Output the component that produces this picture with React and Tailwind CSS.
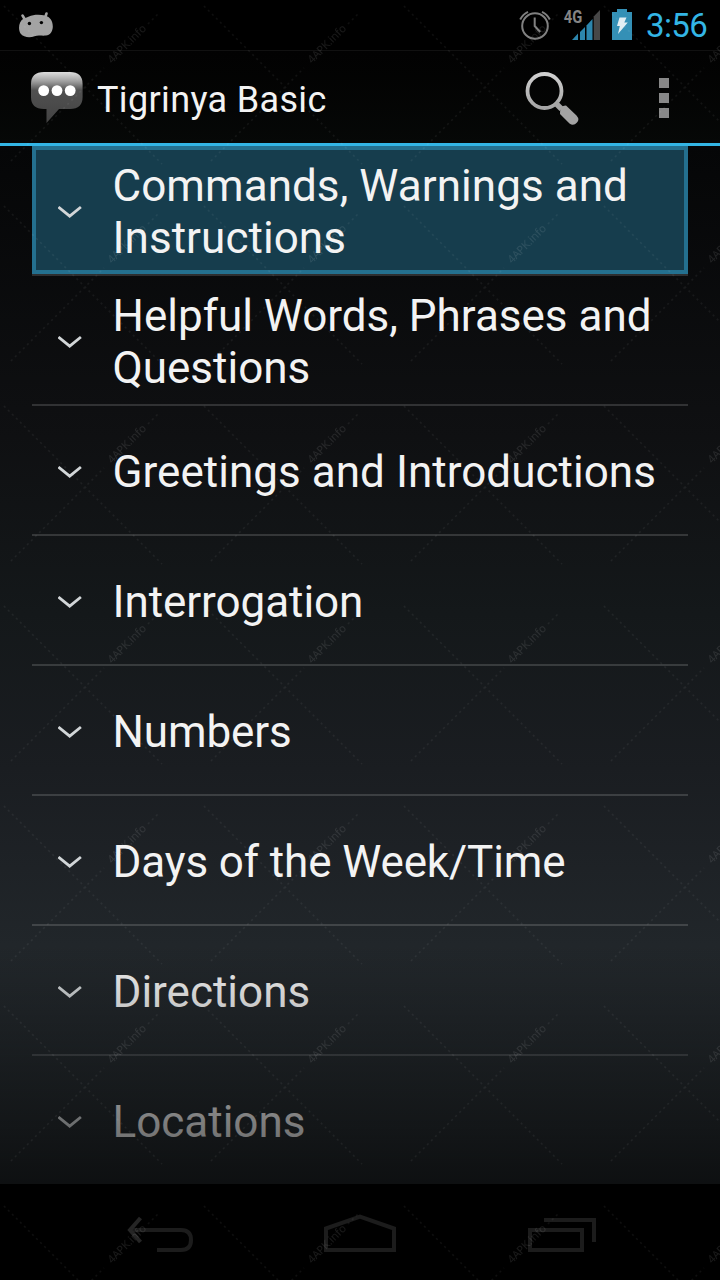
const sections = [
  { title: 'Commands, Warnings and Instructions', selected: true, spacing: 'tracking-[0.06px]' },
  { title: 'Helpful Words, Phrases and Questions', spacing: 'tracking-[0px]' },
  { title: 'Greetings and Introductions', spacing: 'tracking-[0.04px]' },
  { title: 'Interrogation', spacing: 'tracking-[-0.06px]' },
  { title: 'Numbers', spacing: 'tracking-[-0.1px]' },
  { title: 'Days of the Week/Time', spacing: 'tracking-[-0.12px]' },
  { title: 'Directions', spacing: 'tracking-[0px]' },
  { title: 'Locations', spacing: 'tracking-[0px]' }
];

function AndroidHead() {
  return (
    <svg className="h-[28px] w-[36px]" viewBox="0 0 36 28" aria-hidden="true">
      <path d="M4.500 4.500l3 5M28.500 2.500l-2 6" stroke="#a3a3a3" strokeWidth="2.600" strokeLinecap="round" />
      <path d="M11 5.500C15 3.500 22 3.500 27 4.500C32.500 6 35 10.500 34.800 16C34.500 21 32 24 28 24.500C24 25 20 23.800 16.500 25.200C12 27 5.500 26.500 2.500 22.500C-.2 18 1 10.500 5 8Z" fill="#a3a3a3" />
      <circle cx="11.400" cy="12.500" r="1.700" />
      <circle cx="23.400" cy="11.600" r="1.700" />
    </svg>
  );
}

function AlarmIcon() {
  return (
    <svg className="h-[30px] w-8" viewBox="0 0 32 30" fill="none" stroke="#808080" strokeWidth="2" aria-hidden="true">
      <circle cx="16" cy="16" r="12.800" />
      <path d="M15.700 7.500v8.500l5.500 6" />
      <path d="M1.200 9.500Q4 4 9 1.800M30.800 9.500Q28 4 23 1.800" />
    </svg>
  );
}

function SignalIcon() {
  return (
    <svg className="h-[34px] w-10 overflow-visible" viewBox="-4 -2 40 34" aria-hidden="true">
      <path d="M8 32l6-6.500V32z" fill="#2d86ad" />
      <path d="M16 24l5-5v13h-5z" fill="#2d86ad" />
      <path d="M22.500 17.500l6-6.500v21h-6z" fill="#2d86ad" />
      <path d="M29.700 8.500L36 2v30h-6.300z" fill="#474747" />
      <text x="-.3" y="15" fontFamily="Roboto, sans-serif" fontWeight="700" fontSize="19" textLength="18.500" lengthAdjust="spacingAndGlyphs" fill="#858585">4G</text>
    </svg>
  );
}

function BatteryIcon() {
  return (
    <svg className="h-[31px] w-5" viewBox="0 0 20 31" aria-hidden="true">
      <path d="M5 0h10v3h5v28H0V3h5z" fill="#3490b6" />
      <path d="M7.500 8.500h7l-2.200 5h3.500L6 25l1.800-8H5z" fill="#e1eef4" />
    </svg>
  );
}

function StatusBar() {
  return (
    <div className="flex h-[50px] shrink-0 items-start bg-black pl-[18px] pr-3">
      <div className="pt-[11px]"><AndroidHead /></div>
      <div className="ml-auto flex items-start">
        <div className="pt-[10px]"><AlarmIcon /></div>
        <div className="ml-[9px] pt-[6px]"><SignalIcon /></div>
        <div className="ml-3 pt-[9px]"><BatteryIcon /></div>
        <span className="ml-[14px] mt-[6px] w-[62px] whitespace-nowrap text-[33px] leading-[40px] tracking-[-0.6px] text-[#33b5e5]">3:56</span>
      </div>
    </div>
  );
}

function AppIcon() {
  return (
    <svg className="h-[54px] w-[54px]" viewBox="0 0 54 54" aria-hidden="true">
      <defs>
        <linearGradient id="bubble" x1="0" y1="0" x2="0" y2="1">
          <stop offset="0" stopColor="#dedede" />
          <stop offset=".18" stopColor="#a0a0a0" />
          <stop offset=".36" stopColor="#505050" />
          <stop offset="1" stopColor="#434343" />
        </linearGradient>
      </defs>
      <path d="M14 1h26q12.600 0 12.600 12v13q0 12-12.600 12H29L16.500 52V38H14Q1 38 1 26V13Q1 1 14 1z" fill="url(#bubble)" />
      <circle cx="13.700" cy="19.600" r="5.400" fill="#fff" />
      <circle cx="27" cy="19.600" r="5.400" fill="#fff" />
      <circle cx="40.200" cy="19.600" r="5.400" fill="#fff" />
    </svg>
  );
}

function SearchIcon() {
  return (
    <svg className="h-[54px] w-[54px]" viewBox="0 0 54 54" fill="none" aria-hidden="true">
      <defs>
        <linearGradient id="lens" x1="0" y1="0" x2="0" y2="1">
          <stop offset="0" stopColor="#d0d0d0" />
          <stop offset="1" stopColor="#a5a5a5" />
        </linearGradient>
      </defs>
      <circle cx="19.500" cy="19" r="17" stroke="url(#lens)" strokeWidth="3.800" />
      <path d="M30.500 31l6 6" stroke="#a5a5a5" strokeWidth="5.500" />
      <path d="M41 33.500L51.500 43.500Q55 47.500 52 50.500Q48.500 54.500 44.500 51.500L35 42Q35 38.500 35.500 36.500Q37 33.500 41 33.500z" fill="#a3a3a3" />
    </svg>
  );
}

function ActionBar() {
  return (
    <header className="flex h-[96px] shrink-0 items-start border-b-[3px] border-t border-b-[#33b5e5] border-t-[#111] bg-gradient-to-b from-[#020202] to-[#060807] pl-[30px] pr-[51px]">
      <div className="pt-5"><AppIcon /></div>
      <h1 className="ml-[13px] mt-[28px] text-[36px] leading-[42px] tracking-[0.35px] text-[#f3f3f3]">Tigrinya Basic</h1>
      <button className="ml-auto mt-[21px]" type="button" aria-label="Search"><SearchIcon /></button>
      <button className="ml-[80px] mt-[27px] flex flex-col gap-[5px]" type="button" aria-label="More options">
        <span className="size-[10px] bg-[#888]" />
        <span className="size-[10px] bg-[#888]" />
        <span className="size-[10px] bg-[#888]" />
      </button>
    </header>
  );
}

function SectionRow({ title, selected, spacing }) {
  return (
    <li className="h-[130px] border-b-2 border-white/15">
      <button
        className={`flex h-[128px] w-full items-center border-4 pl-[22px] text-left ${selected ? 'border-[#24708f] bg-[#163d4d]' : 'border-transparent'}`}
        type="button"
      >
        <svg className="mt-[4px] h-[14px] w-6 shrink-0" viewBox="0 0 24 14" fill="none" aria-hidden="true">
          <path d="M.5 2L11.700 11.200L22.900 2" stroke="#d2d6d8" strokeWidth="2.800" />
        </svg>
        <span className={`ml-[30.500px] mt-[4px] block w-[570px] text-[44px] leading-[52px] text-[#f3f3f3] ${spacing}`}>{title}</span>
      </button>
    </li>
  );
}

function NavBar() {
  return (
    <nav className="flex h-24 shrink-0 items-start bg-black pl-[126px] pt-[30px]">
      <svg className="h-10 w-[470px]" viewBox="0 0 470 40" fill="none" stroke="#1c1c1c" strokeWidth="4" aria-hidden="true">
        <path d="M5 16h50q10 0 10 10t-10 10H31" />
        <path d="M14.500 4L4 16L14.500 28" stroke="#252525" />
        <path d="M200 36V14.500L234 2.500L268 14.500V36z" />
        <path d="M404 16h52v20h-52zM418 6h50v22" />
      </svg>
    </nav>
  );
}

function Watermark() {
  return (
    <svg className="pointer-events-none absolute inset-0 h-full w-full" aria-hidden="true">
      <defs>
        <pattern id="mark" width="200" height="200" patternUnits="userSpaceOnUse">
          <g stroke="#fff" strokeOpacity=".06" strokeWidth="1.500" strokeDasharray="2 3.700">
            <path d="M4 6L162 164M11 161L104 68M148 24L160 12" />
          </g>
          <text x="0" y="0" transform="translate(112 64) rotate(-45)" fontFamily="Open Sans, sans-serif" fontSize="11" fill="#fff" fillOpacity=".1">4APK.info</text>
        </pattern>
      </defs>
      <rect width="100%" height="100%" fill="url(#mark)" />
    </svg>
  );
}

export default function App() {
  return (
    <div className="relative flex h-[1280px] w-[720px] flex-col overflow-hidden bg-black font-['Roboto',sans-serif]">
      <StatusBar />
      <ActionBar />
      <main className="relative h-[1038px] shrink-0 overflow-hidden bg-[linear-gradient(to_bottom,#050607_0%,#0f1012_28%,#14181a_45%,#1a1d21_60%,#21262a_77%,#272d31_100%)]">
        <ul className="px-8">
          {sections.map((section) => (
            <SectionRow key={section.title} {...section} />
          ))}
        </ul>
        <div className="pointer-events-none absolute inset-x-0 bottom-0 h-[240px] bg-gradient-to-b from-transparent to-black/65" />
      </main>
      <NavBar />
      <Watermark />
    </div>
  );
}
